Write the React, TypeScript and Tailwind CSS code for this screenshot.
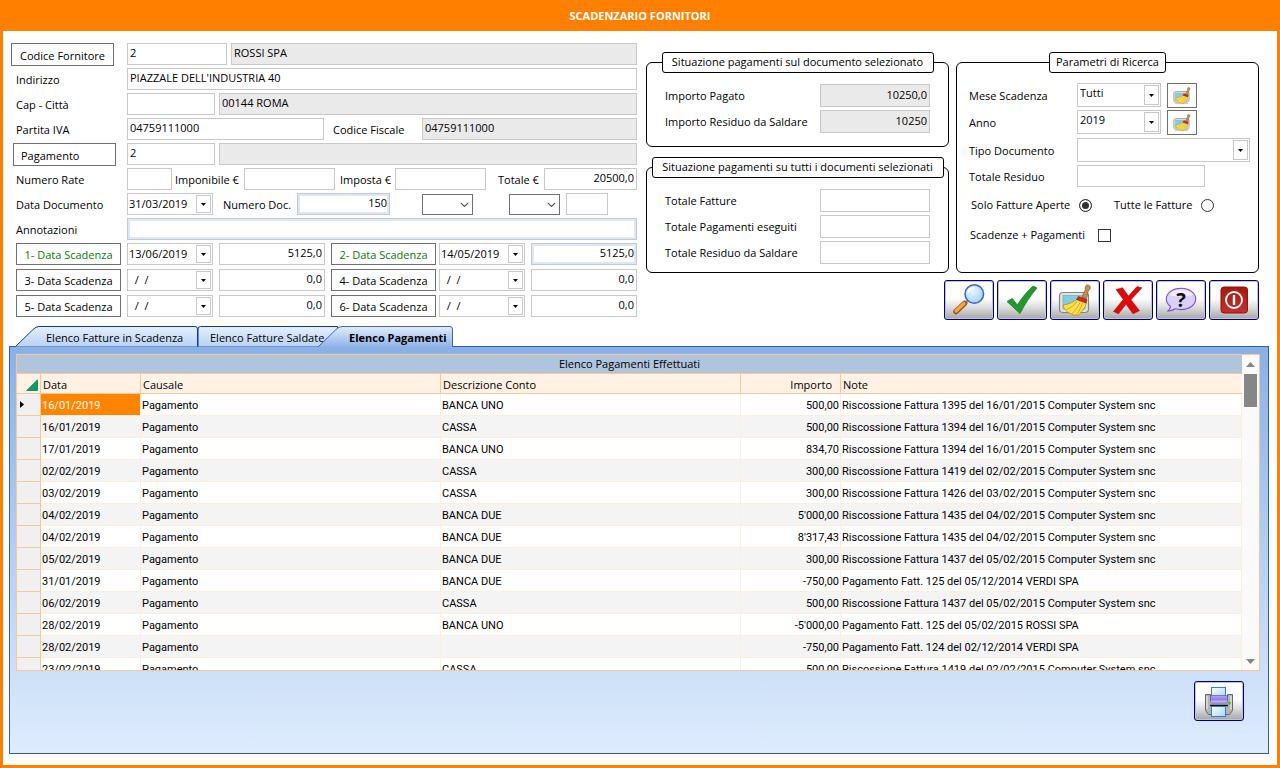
import { useState } from "react";
import type { ReactNode } from "react";

const UI = "font-['Open_Sans','Noto_Sans',sans-serif]";
const LABEL = "whitespace-nowrap pt-0.5 text-[11px] leading-4 text-black";
const FIELD = "h-[22px] min-w-0 border border-[#c8c8c8] px-0.5 pb-1 text-[11px] leading-4 text-black outline-none";
const WHITE = "bg-white";
const GREY = "bg-[#eaeaea]";
const FOCUS = "bg-white shadow-[inset_0_0_0_2px_#dbe8fa]";
const OUTLINED = "block shrink-0 whitespace-nowrap border border-[#707070] bg-white pt-0.5 text-[11px] leading-4";

function Caret() {
  return (
    <svg width="5" height="3" viewBox="0 0 5 3" aria-hidden="true">
      <path d="M0 0h5L2.5 3z" fill="#000" />
    </svg>
  );
}

function DateField({ label, value, className = "" }: { label: string; value: string; className?: string }) {
  return (
    <div className={`flex h-[22px] w-[86px] shrink-0 items-center border border-[#c8c8c8] bg-white pr-px ${className}`}>
      <input
        aria-label={label}
        defaultValue={value}
        className="h-full w-0 grow whitespace-pre pb-px pl-px text-[11px] leading-4 outline-none"
      />
      <button
        type="button"
        aria-label={`Apri calendario ${label}`}
        className="flex h-[18px] w-[15px] shrink-0 items-center justify-center border border-[#c8c8c8]"
      >
        <Caret />
      </button>
    </div>
  );
}

function Combo({ id, value, className }: { id: string; value: string; className: string }) {
  return (
    <div className={`relative h-6 ${className}`}>
      <select
        id={id}
        defaultValue={value}
        className="block h-6 w-full appearance-none border border-[#c8c8c8] bg-white pb-1 pl-0.5 text-[11px] leading-4 outline-none"
      >
        <option>{value}</option>
      </select>
      <span className="pointer-events-none absolute top-0.5 right-0.5 flex h-5 w-[15px] items-center justify-center border border-[#c8c8c8]">
        <Caret />
      </span>
    </div>
  );
}

function SmallSelect({ label, className }: { label: string; className: string }) {
  return (
    <div className={`relative h-[21px] w-[51px] shrink-0 ${className}`}>
      <select aria-label={label} className="block h-[21px] w-full appearance-none border border-[#707070] bg-white outline-none">
        <option></option>
      </select>
      <svg className="pointer-events-none absolute top-2 right-1" width="9" height="6" viewBox="0 0 9 6" aria-hidden="true">
        <path d="M.8.8l3.7 3.7L8.2.8" fill="none" stroke="#555" strokeWidth="1.1" />
      </svg>
    </div>
  );
}

function Broom({ width, height }: { width: number; height: number }) {
  return (
    <svg width={width} height={height} viewBox="8 3 34 32" aria-hidden="true">
      <rect x="9.5" y="11.5" width="29" height="20" rx="3.5" fill="#dfe3e6" stroke="#7f8589" strokeWidth="1.2" />
      <rect x="13" y="14.5" width="22" height="13.5" fill="#7fcfe3" stroke="#9aa3a8" strokeWidth=".8" />
      <path d="M14 32h20l3 1.5-2 1H13l-2-1z" fill="#b9bdc0" />
      <path d="M36 4.500c1.300-1.300 4.500-.3 4.300 2.200-.2 1.800-1.800 2.300-2.300 4.300L36.500 17.500l-4.500-1.800 3-6.200c.8-1.800-.3-3.500 1-5z" fill="#c98d4b" stroke="#8a5620" strokeWidth=".7" />
      <path d="M27 18c-3.500 3.500-8 5-14 6 .5 4 4 7 7 8.500 3 1.500 6 2 8.500 1.700 2.500-3 6.500-6.400 8-12.400z" fill="#f8e04a" stroke="#b98c12" strokeWidth=".8" />
      <path d="M27 20.500c-3 4-6 6-10.500 8M30 21.500c-2 4.500-4.500 8-8 11M32.500 22c-1.500 4-3 8-6 11.500" fill="none" stroke="#c79a1b" strokeWidth=".8" />
      <path d="M28.500 15.500l8.500 3-1 3.500-9.500-3.500z" fill="#cf2a1c" stroke="#8b120b" strokeWidth=".6" />
    </svg>
  );
}

function ToolButton({ label, children }: { label: string; children: ReactNode }) {
  return (
    <button
      type="button"
      aria-label={label}
      className="flex h-10 w-[50px] items-center justify-center rounded-[3px] border border-[#00007f] bg-linear-to-b from-white from-45% via-[#dcdcdc] via-70% to-[#a6a6a6] shadow-[inset_0_0_0_1px_#c4c4cc]"
    >
      {children}
    </button>
  );
}

const ICON = { width: 48, height: 38, viewBox: "1 1 48 38", "aria-hidden": true } as const;

function SearchIcon() {
  return (
    <svg {...ICON}>
      <defs>
        <radialGradient id="lens" cx=".4" cy=".35" r=".7">
          <stop offset="0" stopColor="#eaf8ff" />
          <stop offset="1" stopColor="#9fd0fb" />
        </radialGradient>
      </defs>
      <path d="M23.500 21l-3.500 3.500" stroke="#8f98a8" strokeWidth="3" />
      <path d="M20.500 23.500L12 31.500" stroke="#9a5a16" strokeWidth="5.500" strokeLinecap="round" />
      <path d="M20 23.500L12 31" stroke="#f0a848" strokeWidth="3.200" strokeLinecap="round" />
      <circle cx="30.300" cy="14" r="9.300" fill="url(#lens)" stroke="#3f5fc8" strokeWidth="1.500" />
      <path d="M24 13c.8-3.500 3.500-5.500 7-5.300" fill="none" stroke="#fff" strokeWidth="1.500" />
    </svg>
  );
}

function CheckIcon() {
  return (
    <svg {...ICON}>
      <path d="M10 21.500l5.300-3 5 6.500C25 17.500 30 11.500 36 6l4 2C33.500 15.500 28 24 23 33.500z" fill="#1f9a2b" stroke="#14771e" strokeWidth=".7" />
    </svg>
  );
}

function CrossIcon() {
  return (
    <svg {...ICON}>
      <path d="M13 9.500l6.500-1.800 6 8.300L34 6.500l5 1.300-11 12 8.500 11-6.500 3-7-9.500-7.500 9.500-5-2.300 9.700-12z" fill="#dc0a0a" stroke="#b00000" strokeWidth=".5" />
    </svg>
  );
}

function HelpIcon() {
  return (
    <svg {...ICON}>
      <path d="M25 8.300c8.300 0 14.700 4.700 14.700 10.700S33.300 29.600 25 29.600c-2.200 0-4-.2-5.800-.8-2 1.600-4.500 2.300-7.200 2.200 1.500-1.200 2.300-2.700 2.500-4.600-2.600-1.900-4.200-4.500-4.200-7.400C10.300 13 16.700 8.300 25 8.300z" fill="#d9d0fb" stroke="#7a4be0" strokeWidth="1.100" />
      <path d="M13 15c2-3.500 6.500-5.200 12-5.200s10 1.700 12 5.200c-6 2-18 2-24 0z" fill="#f1edff" />
      <text x="25" y="26.500" textAnchor="middle" fontSize="20" fontWeight="700" fontFamily="'Noto Sans', sans-serif" fill="#111">
        ?
      </text>
    </svg>
  );
}

function PowerIcon() {
  return (
    <svg {...ICON}>
      <defs>
        <linearGradient id="power" x1="0" y1="0" x2="0" y2="1">
          <stop offset="0" stopColor="#a81810" />
          <stop offset="1" stopColor="#c4302a" />
        </linearGradient>
      </defs>
      <rect x="12" y="7" width="26.500" height="26" rx="3" fill="url(#power)" stroke="#8e130d" />
      <circle cx="25" cy="20" r="8" fill="none" stroke="#fff" strokeWidth="1.800" />
      <path d="M25 15v10" stroke="#fff" strokeWidth="2.400" />
    </svg>
  );
}

function PrinterIcon() {
  return (
    <svg {...ICON}>
      <defs>
        <linearGradient id="roller" x1="0" y1="0" x2="0" y2="1">
          <stop offset="0" stopColor="#b9a9f7" />
          <stop offset=".5" stopColor="#8f7fe0" />
          <stop offset="1" stopColor="#d8d0fb" />
        </linearGradient>
        <linearGradient id="sheet" x1="0" y1="0" x2="1" y2="1">
          <stop offset="0" stopColor="#fff" />
          <stop offset="1" stopColor="#a6d4fb" />
        </linearGradient>
      </defs>
      <path d="M11.500 13.500h5v6h17v-6h5v16l-3 4h-21l-3-4z" fill="#b4b4b8" stroke="#66666a" />
      <path d="M13 15v13M37 15v13" stroke="#f3f3f3" />
      <rect x="17.500" y="6.500" width="14" height="10" fill="url(#sheet)" stroke="#2f7fd6" />
      <rect x="16.500" y="14.500" width="17" height="7.500" rx="1.500" fill="url(#roller)" stroke="#6a5bc4" strokeWidth=".8" />
      <path d="M16 24.500h18" stroke="#111" strokeWidth="1.500" />
      <rect x="17.500" y="25.500" width="14" height="10" fill="url(#sheet)" stroke="#2f7fd6" />
      <circle cx="35.300" cy="22" r="1.600" fill="#3fc41e" />
    </svg>
  );
}

type Due = { n: number; date: string; amount: string; active: boolean };

const DUES: [Due, Due][] = [
  [
    { n: 1, date: "13/06/2019", amount: "5125,0", active: true },
    { n: 2, date: "14/05/2019", amount: "5125,0", active: true },
  ],
  [
    { n: 3, date: "  /  /", amount: "0,0", active: false },
    { n: 4, date: "  /  /", amount: "0,0", active: false },
  ],
  [
    { n: 5, date: "  /  /", amount: "0,0", active: false },
    { n: 6, date: "  /  /", amount: "0,0", active: false },
  ],
];

const PAYMENTS: [string, string, string, string][] = [
  ["16/01/2019", "BANCA UNO", "500,00", "Riscossione Fattura 1395 del 16/01/2015 Computer System snc"],
  ["16/01/2019", "CASSA", "500,00", "Riscossione Fattura 1394 del 16/01/2015 Computer System snc"],
  ["17/01/2019", "BANCA UNO", "834,70", "Riscossione Fattura 1394 del 16/01/2015 Computer System snc"],
  ["02/02/2019", "CASSA", "300,00", "Riscossione Fattura 1419 del 02/02/2015 Computer System snc"],
  ["03/02/2019", "CASSA", "300,00", "Riscossione Fattura 1426 del 03/02/2015 Computer System snc"],
  ["04/02/2019", "BANCA DUE", "5'000,00", "Riscossione Fattura 1435 del 04/02/2015 Computer System snc"],
  ["04/02/2019", "BANCA DUE", "8'317,43", "Riscossione Fattura 1435 del 04/02/2015 Computer System snc"],
  ["05/02/2019", "BANCA DUE", "300,00", "Riscossione Fattura 1437 del 05/02/2015 Computer System snc"],
  ["31/01/2019", "BANCA DUE", "-750,00", "Pagamento Fatt. 125 del 05/12/2014 VERDI SPA"],
  ["06/02/2019", "CASSA", "500,00", "Riscossione Fattura 1437 del 05/02/2015 Computer System snc"],
  ["28/02/2019", "BANCA UNO", "-5'000,00", "Pagamento Fatt. 125 del 05/02/2015 ROSSI SPA"],
  ["28/02/2019", "", "-750,00", "Pagamento Fatt. 124 del 02/12/2014 VERDI SPA"],
  ["23/02/2019", "CASSA", "500,00", "Riscossione Fattura 1419 del 02/02/2015 Computer System snc"],
];

function SupplierForm() {
  return (
    <form className="flex flex-col gap-[3px] pr-[9px]" onSubmit={(e) => e.preventDefault()}>
      <div className="flex h-[22px] items-start">
        <div className="w-[116px] shrink-0">
          <button type="button" className={`${OUTLINED} h-[23px] w-[103px]`}>Codice Fornitore</button>
        </div>
        <input aria-label="Codice Fornitore" defaultValue="2" className={`${FIELD} ${WHITE} mr-1 w-[100px]`} />
        <input aria-label="Ragione sociale" readOnly value="ROSSI SPA" className={`${FIELD} ${GREY} grow`} />
      </div>
      <div className="flex h-[22px] items-center">
        <label htmlFor="indirizzo" className={`${LABEL} w-[116px] shrink-0 pl-[5px]`}>Indirizzo</label>
        <input id="indirizzo" defaultValue="PIAZZALE DELL'INDUSTRIA 40" className={`${FIELD} ${WHITE} grow`} />
      </div>
      <div className="flex h-[22px] items-center">
        <label htmlFor="cap" className={`${LABEL} w-[116px] shrink-0 pl-[5px]`}>Cap - Città</label>
        <input id="cap" className={`${FIELD} ${WHITE} mr-1 w-[88px]`} />
        <input aria-label="Città" readOnly value="00144 ROMA" className={`${FIELD} ${GREY} grow`} />
      </div>
      <div className="flex h-[22px] items-center">
        <label htmlFor="piva" className={`${LABEL} w-[116px] shrink-0 pl-[5px]`}>Partita IVA</label>
        <input id="piva" defaultValue="04759111000" className={`${FIELD} ${WHITE} w-[197px]`} />
        <label htmlFor="cf" className={`${LABEL} w-[98px] shrink-0 pl-[9px]`}>Codice Fiscale</label>
        <input id="cf" readOnly value="04759111000" className={`${FIELD} ${GREY} grow`} />
      </div>
      <div className="flex h-[22px] items-start">
        <div className="w-[116px] shrink-0 pl-0.5">
          <button type="button" className={`${OUTLINED} h-[23px] w-[103px] pl-[7px] text-left`}>Pagamento</button>
        </div>
        <input aria-label="Pagamento" defaultValue="2" className={`${FIELD} ${WHITE} mr-1 w-[88px]`} />
        <input aria-label="Descrizione pagamento" readOnly className={`${FIELD} ${GREY} grow`} />
      </div>
      <div className="flex h-[22px] items-center">
        <label htmlFor="rate" className={`${LABEL} w-[116px] shrink-0 pl-[5px]`}>Numero Rate</label>
        <input id="rate" className={`${FIELD} ${WHITE} w-[45px]`} />
        <label htmlFor="imponibile" className={`${LABEL} w-[72px] shrink-0 pl-[3px]`}>Imponibile €</label>
        <input id="imponibile" className={`${FIELD} ${WHITE} w-[91px]`} />
        <label htmlFor="imposta" className={`${LABEL} w-[60px] shrink-0 pl-[5px]`}>Imposta €</label>
        <input id="imposta" className={`${FIELD} ${WHITE} w-[91px]`} />
        <label htmlFor="totale" className={`${LABEL} w-[58px] shrink-0 pl-3`}>Totale €</label>
        <input id="totale" defaultValue="20500,0" className={`${FIELD} ${WHITE} w-0 grow text-right`} />
      </div>
      <div className="flex h-[22px] items-center">
        <span className={`${LABEL} w-[116px] shrink-0 pl-[5px]`}>Data Documento</span>
        <DateField label="Data Documento" value="31/03/2019" />
        <label htmlFor="numdoc" className={`${LABEL} w-[84px] shrink-0 pl-2.5`}>Numero Doc.</label>
        <input id="numdoc" defaultValue="150" className={`${FIELD} ${FOCUS} w-[93px] text-right`} />
        <SmallSelect label="Serie" className="ml-8" />
        <SmallSelect label="Tipo" className="ml-9" />
        <input aria-label="Codice tipo" className={`${FIELD} ${WHITE} ml-1.5 w-[42px]`} />
      </div>
      <div className="flex h-[22px] items-center">
        <label htmlFor="note" className={`${LABEL} w-[116px] shrink-0 pl-[5px]`}>Annotazioni</label>
        <input id="note" className={`${FIELD} ${FOCUS} grow`} />
      </div>
      <div className="flex flex-col gap-1">
        {DUES.map(([a, b]) => (
          <div key={a.n} className="flex h-[22px] items-center pl-[5px]">
            <button type="button" className={`${OUTLINED} h-[22px] w-[105px] ${a.active ? "text-[#008000]" : "text-black"}`}>
              {a.n}- Data Scadenza
            </button>
            <DateField label={`Data scadenza ${a.n}`} value={a.date} className="ml-1.5" />
            <input aria-label={`Importo ${a.n}`} defaultValue={a.amount} className={`${FIELD} ${WHITE} ml-1.5 w-0 grow text-right`} />
            <button type="button" className={`${OUTLINED} ml-1.5 h-[22px] w-[105px] ${b.active ? "text-[#008000]" : "text-black"}`}>
              {b.n}- Data Scadenza
            </button>
            <DateField label={`Data scadenza ${b.n}`} value={b.date} className="ml-[3px]" />
            <input
              aria-label={`Importo ${b.n}`}
              defaultValue={b.amount}
              className={`${FIELD} ${b.active ? FOCUS : WHITE} ml-1.5 w-0 grow text-right`}
            />
          </div>
        ))}
      </div>
    </form>
  );
}

function Group({ title, legend, body, children }: { title: string; legend: string; body: string; children: ReactNode }) {
  return (
    <fieldset className="min-w-0 rounded-md border border-black">
      <legend className={`mx-auto h-[21px] rounded-[3px] border border-black bg-white text-center text-[11px] leading-[18px] whitespace-nowrap ${legend}`}>
        {title}
      </legend>
      <div className={body}>{children}</div>
    </fieldset>
  );
}

function TotalRow({ id, label, value, filled }: { id: string; label: string; value?: string; filled?: boolean }) {
  return (
    <div className="flex h-[23px] items-center justify-between">
      <label htmlFor={id} className="text-[11px] leading-4 whitespace-nowrap">{label}</label>
      <input
        id={id}
        readOnly
        value={value ?? ""}
        className={`h-[23px] w-[110px] border border-[#c8c8c8] px-0.5 pb-0.5 text-right text-[11px] leading-4 outline-none ${filled ? GREY : WHITE}`}
      />
    </div>
  );
}

function SearchPanel() {
  const [scope, setScope] = useState("aperte");
  const radio = "size-[13px] shrink-0 appearance-none rounded-full border border-[#333] bg-white checked:bg-[#333] checked:shadow-[inset_0_0_0_2px_#fff]";
  const label = "w-[108px] shrink-0 pt-px text-[11px] leading-4 whitespace-nowrap";
  return (
    <Group title="Parametri di Ricerca" legend="w-[117px]" body="flex flex-col gap-[3px] pt-2.5 pr-2 pl-3">
      <div className="flex h-6 items-center">
        <label htmlFor="mese" className={label}>Mese Scadenza</label>
        <Combo id="mese" value="Tutti" className="w-[84px]" />
        <button type="button" aria-label="Pulisci mese" className="ml-1.5 flex h-[25px] w-[30px] items-center justify-center border border-[#707070]">
          <Broom width={18} height={17} />
        </button>
      </div>
      <div className="flex h-6 items-center">
        <label htmlFor="anno" className={label}>Anno</label>
        <Combo id="anno" value="2019" className="w-[84px]" />
        <button type="button" aria-label="Pulisci anno" className="ml-1.5 flex h-[25px] w-[30px] items-center justify-center border border-[#707070]">
          <Broom width={18} height={17} />
        </button>
      </div>
      <div className="mt-px flex h-6 items-center">
        <label htmlFor="tipodoc" className={label}>Tipo Documento</label>
        <Combo id="tipodoc" value="" className="grow" />
      </div>
      <div className="flex h-[22px] items-center">
        <label htmlFor="residuo" className={label}>Totale Residuo</label>
        <input id="residuo" className={`${FIELD} ${WHITE} w-[128px]`} />
      </div>
      <div className="mt-[3px] flex h-6 items-center gap-[22px] pl-0.5">
        <label className="flex w-[121px] items-center justify-between text-[11px] leading-4 whitespace-nowrap">
          Solo Fatture Aperte
          <input type="radio" name="scope" checked={scope === "aperte"} onChange={() => setScope("aperte")} className={radio} />
        </label>
        <label className="flex w-[100px] items-center justify-between text-[11px] leading-4 whitespace-nowrap">
          Tutte le Fatture
          <input type="radio" name="scope" checked={scope === "tutte"} onChange={() => setScope("tutte")} className={radio} />
        </label>
      </div>
      <label className="mt-[3px] flex h-6 w-[142px] items-center justify-between pl-px text-[11px] leading-4 whitespace-nowrap">
        Scadenze + Pagamenti
        <input type="checkbox" className="size-[13px] shrink-0 appearance-none border border-[#333] bg-white checked:bg-[#333]" />
      </label>
    </Group>
  );
}

function TabShape({ path, active }: { path: string; active?: boolean }) {
  return (
    <svg className="absolute inset-0 h-full w-full" aria-hidden="true">
      <defs>
        <linearGradient id={active ? "tab-on" : "tab-off"} x1="0" y1="0" x2="0" y2="1">
          <stop offset="0" stopColor={active ? "#e2edfc" : "#e6effb"} />
          <stop offset="1" stopColor={active ? "#8fb3e8" : "#b9d2f5"} />
        </linearGradient>
      </defs>
      <path d={path} fill={active ? "url(#tab-on)" : "url(#tab-off)"} stroke={active ? "#3f66a8" : "#0b3a94"} />
    </svg>
  );
}

function Tabs() {
  const base = "relative h-[21px] shrink-0 whitespace-nowrap";
  return (
    <div role="tablist" className="relative -mb-px flex pl-[6px]">
      <button role="tab" type="button" aria-selected="false" className={`${base} w-[183px]`}>
        <TabShape path="M.5 20.5L18 3.500Q21 .5 24 .5H180Q182.500.5 182.500 3V20.500" />
        <span className="relative block pt-0.5 pl-[31px] text-left text-[11px] leading-[18px]">Elenco Fatture in Scadenza</span>
      </button>
      <button role="tab" type="button" aria-selected="false" className={`${base} w-[140px]`}>
        <TabShape path="M0 20.500V3Q0 .5 2.500.5H139.500V20.500" />
        <span className="relative block pt-0.5 pl-3 text-left text-[11px] leading-[18px]">Elenco Fatture Saldate</span>
      </button>
      <button role="tab" type="button" aria-selected="true" className={`${base} -ml-5 w-[135px]`}>
        <TabShape active path="M0 21L18 3.500Q21 .5 24 .5H132Q134.500.5 134.500 3V21" />
        <span className="relative block pt-0.5 pl-[31px] text-left text-[11px] leading-[18px] font-bold">Elenco Pagamenti</span>
      </button>
    </div>
  );
}

function PaymentsTable() {
  const th = "border-r border-b border-[#f5c896] bg-[#fff1e3] px-0.5 pt-0.5 text-left font-normal";
  const td = "overflow-hidden border-r border-b border-[#feeedd] px-px pt-0.5 whitespace-nowrap";
  return (
    <div className="flex h-[317px] border border-[#f5c896] bg-white">
      <div className="min-w-0 grow overflow-hidden">
        <table className="w-full table-fixed border-separate border-spacing-0 text-[11px] leading-4">
          <caption className="h-[19px] border-b border-[#f5c896] bg-[#b0c4de] text-[11px] leading-[18px]">Elenco Pagamenti Effettuati</caption>
          <colgroup>
            <col className="w-6" />
            <col className="w-[100px]" />
            <col className="w-[300px]" />
            <col className="w-[300px]" />
            <col className="w-[100px]" />
            <col />
          </colgroup>
          <thead>
            <tr className="h-5">
              <th className={th} aria-label="Selezione">
                <svg className="ml-auto" width="12" height="12" viewBox="0 0 12 12" aria-hidden="true">
                  <path d="M11.500.8v10.700H.8z" fill="#0d9b68" stroke="#0a7a50" strokeWidth=".8" />
                </svg>
              </th>
              <th className={th}>Data</th>
              <th className={th}>Causale</th>
              <th className={th}>Descrizione Conto</th>
              <th className="border-r border-b border-[#f5c896] bg-[#fff1e3] pt-0.5 pr-2 text-right font-normal">Importo</th>
              <th className="border-b border-[#f5c896] bg-[#fff1e3] px-0.5 pt-0.5 text-left font-normal">Note</th>
            </tr>
          </thead>
          <tbody className="font-[Roboto,sans-serif]">
            {PAYMENTS.map(([date, account, amount, note], i) => (
              <tr key={i} className={`h-[22px] ${i % 2 ? "bg-[#f4f4f4]" : "bg-white"}`}>
                <td className="border-r border-b border-[#f5c896] bg-[#f0f0f0] pl-[3px]">
                  {i === 0 && (
                    <svg width="4" height="7" viewBox="0 0 4 7" aria-label="Riga corrente">
                      <path d="M0 0l4 3.500L0 7z" fill="#000" />
                    </svg>
                  )}
                </td>
                <td className={`${td} ${i === 0 ? "bg-[#ff8400] text-white" : ""}`}>{date}</td>
                <td className={td}>Pagamento</td>
                <td className={td}>{account}</td>
                <td className={`${td} text-right`}>{amount}</td>
                <td className={td}>{note}</td>
              </tr>
            ))}
          </tbody>
        </table>
      </div>
      <div className="flex w-[17px] shrink-0 flex-col items-center bg-[#fafafa]">
        <div className="flex h-[19px] items-center">
          <svg width="9" height="5" viewBox="0 0 9 5" aria-hidden="true">
            <path d="M4.500 0L9 5H0z" fill="#868686" />
          </svg>
        </div>
        <div className="h-[33px] w-[13px] bg-[#868686]" />
        <div className="mt-auto flex h-[18px] items-center">
          <svg width="9" height="5" viewBox="0 0 9 5" aria-hidden="true">
            <path d="M0 0h9L4.500 5z" fill="#868686" />
          </svg>
        </div>
      </div>
    </div>
  );
}

export default function App() {
  return (
    <div className={`flex min-h-screen flex-col border-[3px] border-t-0 border-[#ff8000] bg-white text-black ${UI}`}>
      <header className="flex h-[31px] items-center justify-center bg-[#ff8000]">
        <h1 className="text-[11px] leading-4 font-bold text-white">SCADENZARIO FORNITORI</h1>
      </header>
      <div className="grid grid-cols-[635fr_613fr] pt-3 pr-[18px] pl-2">
        <SupplierForm />
        <div className="flex flex-col gap-[7px] pt-[9px]">
          <div className="grid grid-cols-2 gap-[7px]">
            <div className="flex flex-col gap-2.5">
              <Group title="Situazione pagamenti sul documento selezionato" legend="w-[272px]" body="flex flex-col gap-[3px] px-[18px] pt-[11px] pb-[13px]">
                <TotalRow id="pagato" label="Importo Pagato" value="10250,0" filled />
                <TotalRow id="residuo-doc" label="Importo Residuo da Saldare" value="10250" filled />
              </Group>
              <Group title="Situazione pagamenti su tutti i documenti selezionati" legend="w-[292px]" body="flex flex-col gap-[3px] px-[18px] pt-[11px] pb-2">
                <TotalRow id="tot-fatture" label="Totale Fatture" />
                <TotalRow id="tot-pagamenti" label="Totale Pagamenti eseguiti" />
                <TotalRow id="tot-residuo" label="Totale Residuo da Saldare" />
              </Group>
            </div>
            <SearchPanel />
          </div>
          <div className="flex justify-end gap-[3px]">
            <ToolButton label="Cerca"><SearchIcon /></ToolButton>
            <ToolButton label="Conferma"><CheckIcon /></ToolButton>
            <ToolButton label="Pulisci"><Broom width={34} height={32} /></ToolButton>
            <ToolButton label="Annulla"><CrossIcon /></ToolButton>
            <ToolButton label="Aiuto"><HelpIcon /></ToolButton>
            <ToolButton label="Esci"><PowerIcon /></ToolButton>
          </div>
        </div>
      </div>
      <main className="flex grow flex-col px-1.5 pt-1.5 pr-2 pb-[11px]">
        <Tabs />
        <section className="grow border border-[#2f5ea8] bg-linear-to-b from-[#8bb0e6] to-[#deecfd] px-1.5 pt-[7px] pr-2">
          <PaymentsTable />
          <div className="flex justify-end pt-2.5 pr-4">
            <ToolButton label="Stampa"><PrinterIcon /></ToolButton>
          </div>
        </section>
      </main>
    </div>
  );
}
